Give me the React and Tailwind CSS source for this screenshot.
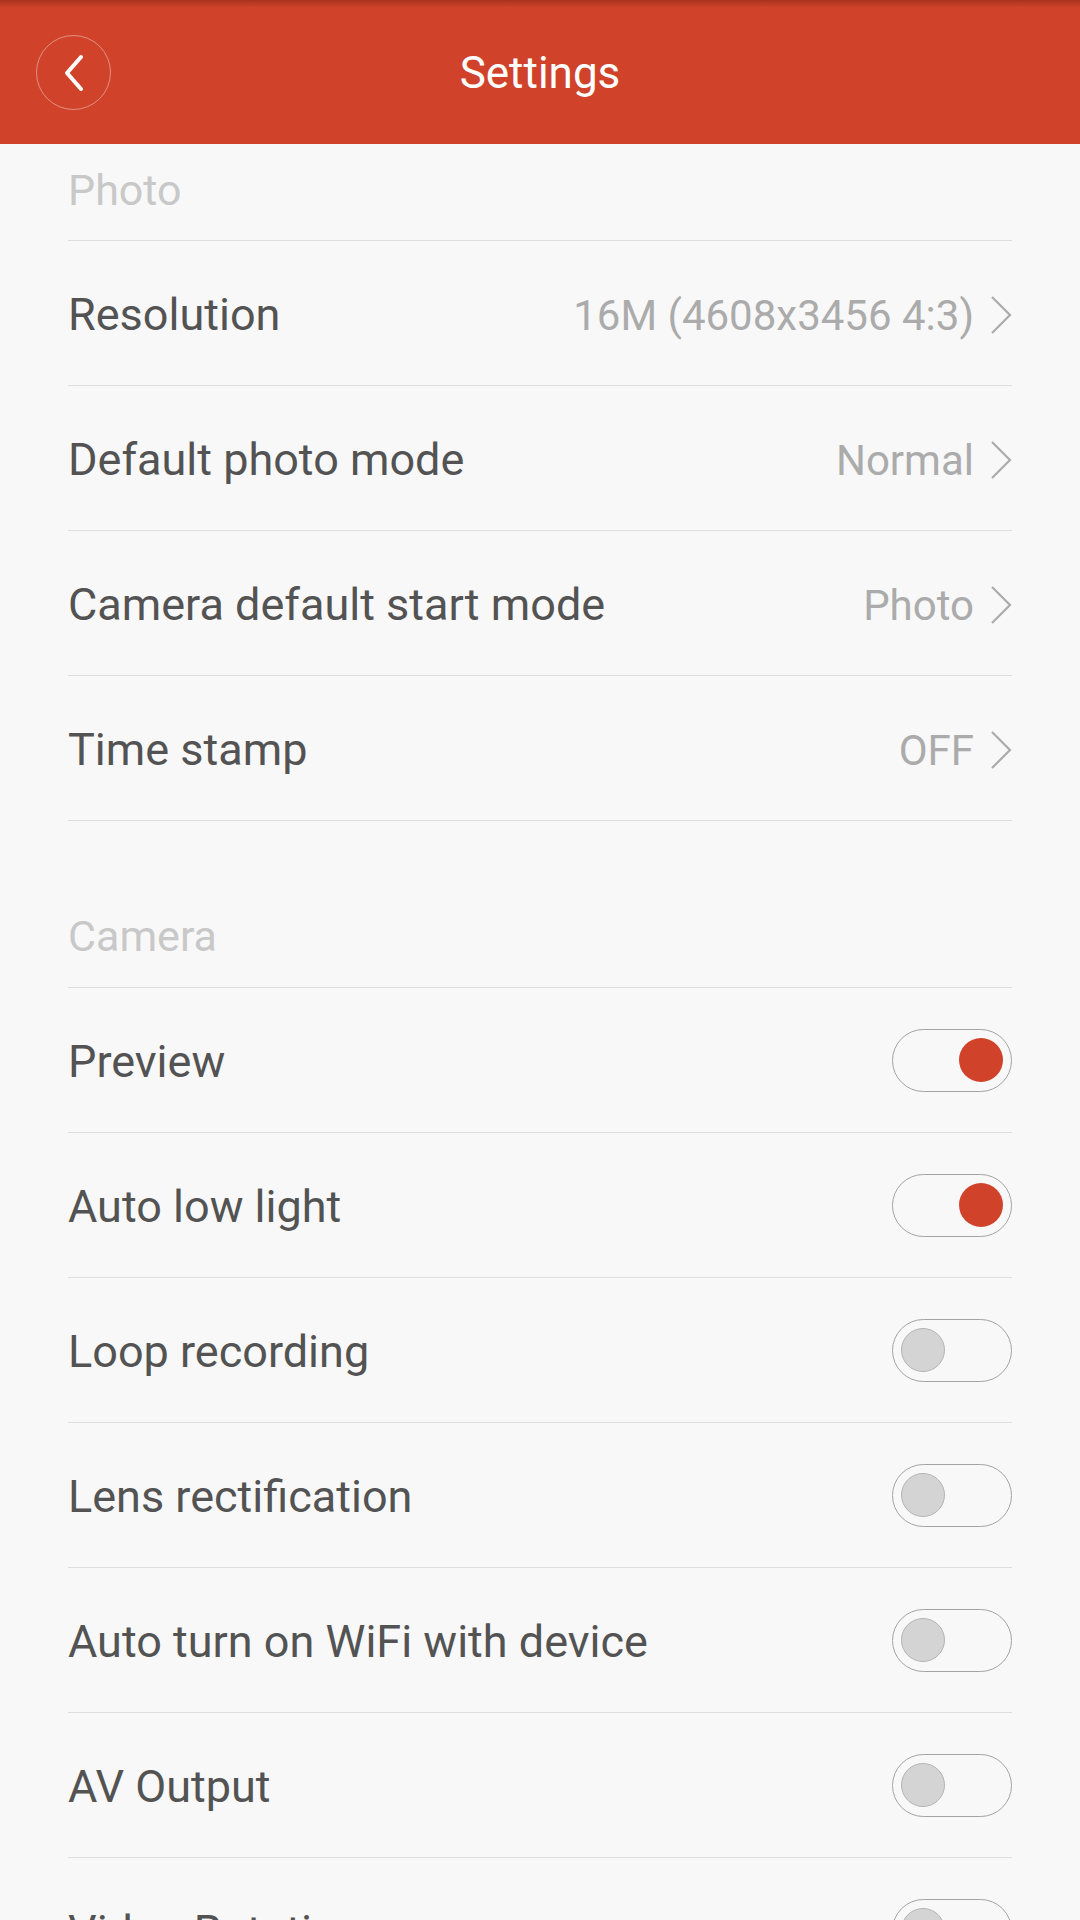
import React, { Component } from "react";

const photoRows = [
  { label: "Resolution", value: "16M (4608x3456 4:3)" },
  { label: "Default photo mode", value: "Normal" },
  { label: "Camera default start mode", value: "Photo" },
  { label: "Time stamp", value: "OFF" },
];

const cameraRows = [
  { key: "preview", label: "Preview" },
  { key: "lowLight", label: "Auto low light" },
  { key: "loop", label: "Loop recording" },
  { key: "lens", label: "Lens rectification" },
  { key: "wifi", label: "Auto turn on WiFi with device" },
  { key: "av", label: "AV Output" },
  { key: "rotation", label: "Video Rotation" },
];

const Chevron = () => (
  <svg width="22" height="38" viewBox="0 0 22 38" className="ml-[16px] shrink-0">
    <path d="M2 1 L20 19 L2 37" fill="none" stroke="#ababab" strokeWidth="2.2" />
  </svg>
);

const Toggle = ({ on, onClick }) => (
  <button
    onClick={onClick}
    className={`w-[120px] h-[63px] rounded-full border-[1.5px] border-[#a3a3a3] bg-[#f8f8f8] flex items-center px-[8px] shrink-0 ${
      on ? "justify-end" : "justify-start"
    }`}
  >
    <span
      className={`block w-[44px] h-[44px] rounded-full ${
        on ? "bg-[#d0432a]" : "bg-[#d4d4d4] border border-[#b4b4b4]"
      }`}
    />
  </button>
);

class App extends Component {
  constructor(props) {
    super(props);
    this.state = {
      preview: true,
      lowLight: true,
      loop: false,
      lens: false,
      wifi: false,
      av: false,
      rotation: false,
    };
  }

  toggle = (key) => {
    this.setState({ [key]: !this.state[key] });
  };

  render() {
    return (
      <div
        className="w-[1080px] h-[1920px] overflow-hidden bg-[#f8f8f8]"
        style={{ fontFamily: "Roboto, 'Noto Sans', sans-serif" }}
      >
        {/* Header */}
        <div className="relative h-[144px] bg-[#d0432a] flex items-center justify-center">
          <div className="absolute top-0 left-0 right-0 h-[8px] bg-gradient-to-b from-[#a8341f] to-[#d0432a]" />
          <button className="absolute left-[36px] top-[35px] w-[75px] h-[75px] rounded-full border-[1.5px] border-white/40 flex items-center justify-center">
            <svg width="24" height="38" viewBox="0 0 24 38">
              <path
                d="M19 3 L5 19 L19 35"
                fill="none"
                stroke="white"
                strokeWidth="4"
                strokeLinecap="round"
                strokeLinejoin="round"
              />
            </svg>
          </button>
          <h1 className="text-white text-[44px] leading-none mt-[2px]">Settings</h1>
        </div>

        <div className="px-[68px]">
          {/* Photo section */}
          <div className="h-[97px] flex items-center pb-[4px] border-b border-[#dedede]">
            <span className="text-[43px] text-[#c8c8c8]">Photo</span>
          </div>
          {photoRows.map((row) => (
            <div
              key={row.label}
              className="h-[145px] flex items-center justify-between pt-[4px] border-b border-[#dedede]"
            >
              <span className="text-[45px] text-[#535353]">{row.label}</span>
              <div className="flex items-center">
                <span className="text-[42px] text-[#ababab]">{row.value}</span>
                <Chevron />
              </div>
            </div>
          ))}

          {/* Camera section */}
          <div className="h-[69px]" />
          <div className="h-[98px] flex items-center pb-[4px] border-b border-[#dedede]">
            <span className="text-[43px] text-[#c8c8c8]">Camera</span>
          </div>
          {cameraRows.map((row) => (
            <div
              key={row.key}
              className="h-[145px] flex items-center justify-between border-b border-[#dedede]"
            >
              <span className="text-[45px] text-[#535353] pt-[4px]">{row.label}</span>
              <Toggle on={this.state[row.key]} onClick={() => this.toggle(row.key)} />
            </div>
          ))}
        </div>
      </div>
    );
  }
}

export default App;
